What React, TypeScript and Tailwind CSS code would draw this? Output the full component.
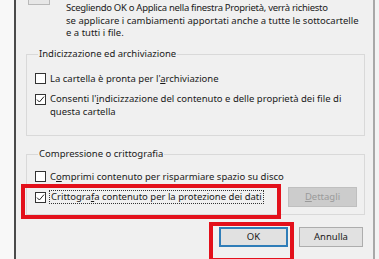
import React from 'react';

const Check: React.FC<{ checked?: boolean }> = ({ checked }) => (
  <span className="w-[11px] h-[11px] border border-[#333333] bg-white flex items-center justify-center shrink-0">
    {checked && (
      <svg width="9" height="9" viewBox="0 0 9 9">
        <path d="M1 4.6 L3.4 7 L8 1.6" fill="none" stroke="#222" strokeWidth="1" />
      </svg>
    )}
  </span>
);

const App: React.FC = () => {
  return (
    <div className="w-[379px] h-[259px] flex overflow-hidden text-[9.5px] leading-[12.5px] text-[#1a1a1a] font-['Noto_Sans',sans-serif]">
      <div className="w-[16px] bg-[#f8f8f8] border-r-2 border-[#4b4b4b]" />

      <div className="flex-1 bg-[#f0f0f0] relative flex flex-col pl-[10px] pr-[8px]">
        {/* top row: icon + info text */}
        <div className="flex h-[48px]">
          <div className="w-[22px] h-[5px] ml-[2px] border border-t-0 border-[#b9b9b9] bg-[#e7e7e7]" />
          <p className="ml-[16px] pt-[2px]">
            <span className="tracking-[-0.3px]">Scegliendo OK o Applica nella finestra Proprietà, verrà richiesto</span>
            <br />
            se applicare i cambiamenti apportati anche a tutte le sottocartelle
            <br />e a tutti i file.
          </p>
        </div>

        <fieldset className="border border-[#d9d9d9] h-[88px] px-[8px]">
          <legend className="px-[1px] ml-[3px]">Indicizzazione ed archiviazione</legend>
          <div className="flex items-center gap-[4px] mt-[12px]">
            <Check />
            <span>
              La cartella è pronta per l'<u>a</u>rchiviazione
            </span>
          </div>
          <div className="flex items-start gap-[4px] mt-[8px]">
            <span className="mt-[1px]">
              <Check checked />
            </span>
            <span>
              Consenti l'<u>i</u>ndicizzazione del contenuto e delle proprietà dei file di
              <br />
              questa cartella
            </span>
          </div>
        </fieldset>

        <fieldset className="border border-[#d9d9d9] h-[67px] mt-[12px] px-[8px]">
          <legend className="px-[1px] ml-[3px]">Compressione o crittografia</legend>
          <div className="flex items-center gap-[4px] mt-[10px]">
            <Check />
            <span>
              C<u>o</u>mprimi contenuto per risparmiare spazio su disco
            </span>
          </div>
          <div className="flex items-center mt-[4px]">
            <div className="flex items-center gap-[3px] flex-1">
              <Check checked />
              <span className="border border-dotted border-[#333] px-[1px]">
                Crittogra<u>f</u>a contenuto per la protezione dei dati
              </span>
            </div>
            <button className="w-[69px] h-[20px] bg-[#cccccc] border border-[#bfbfbf] text-[#9a9a9a] mr-[-1px]">
              <u>D</u>ettagli
            </button>
          </div>
        </fieldset>

        <div className="flex justify-end gap-[11px] mt-[12px] pr-[2px]">
          <button className="w-[69px] h-[20px] bg-[#e1e1e1] border-2 border-[#2f7db8]">OK</button>
          <button className="w-[64px] h-[20px] bg-[#e1e1e1] border border-[#adadad]">Annulla</button>
        </div>

        {/* annotation highlights */}
        <div className="absolute left-[5px] top-[184px] w-[260px] h-[35px] border-[4px] border-[#e3101b]" />
        <div className="absolute left-[193px] top-[222px] w-[85px] h-[40px] border-[4px] border-[#e3101b]" />
      </div>

      <div className="w-[6px] bg-[#f3f3f3] border-l-2 border-[#a8a8a8]" />
    </div>
  );
};

export default App;
